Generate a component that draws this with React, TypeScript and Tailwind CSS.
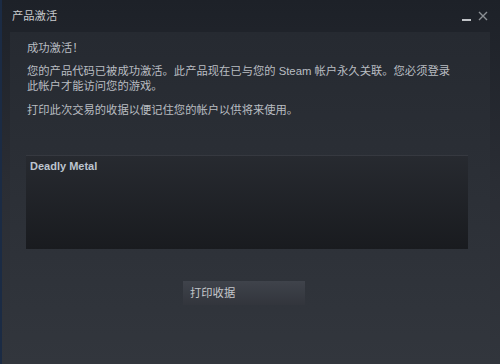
import React from 'react';

const cjk = '"Liberation Sans", "Noto Sans CJK SC", sans-serif';

export default function App() {
  return (
    <div
      className="w-[500px] h-[364px] flex flex-col border-l-2 border-[#1b2b44] bg-gradient-to-b from-[#1d2128] via-[#2a2d34] to-[#31353c] text-[#b9bdc2] overflow-hidden"
      style={{ fontFamily: cjk }}
    >
      {/* Title bar */}
      <div className="h-[32px] flex items-center justify-between pl-[10px] pr-[12px] shrink-0">
        <span className="text-[11.3px] text-[#c8cacd]">产品激活</span>
        <div className="flex items-center gap-[7px]">
          <div className="w-[9px] h-[2px] bg-[#c0c3c7] mt-[7px]" />
          <svg width="10" height="10" viewBox="0 0 10 10" className="text-[#8b8f94]">
            <path d="M1 1 L9 9 M9 1 L1 9" stroke="currentColor" strokeWidth="1.4" />
          </svg>
        </div>
      </div>

      {/* Inner panel */}
      <div className="flex-1 ml-[8px] mr-[10px] bg-gradient-to-b from-[#262a31] to-[#32363d] px-[17px] pt-[9px] flex flex-col">
        <p className="text-[11.3px] leading-[15px]">成功激活！</p>
        <p className="text-[11.3px] leading-[15px] mt-[8px] w-[432px]">
          您的产品代码已被成功激活。此产品现在已与您的 Steam 帐户永久关联。您必须登录此帐户才能访问您的游戏。
        </p>
        <p className="text-[11.3px] leading-[15px] mt-[9px]">打印此次交易的收据以便记住您的帐户以供将来使用。</p>

        <div className="mt-[37px] h-[94px] w-[442px] -ml-[1px] border-t border-[#363940] bg-gradient-to-b from-[#272a30] to-[#191b1f] px-[4px] pt-[3px]">
          <p className="text-[11px] leading-[14px] font-bold text-[#bcc4cf]">Deadly Metal</p>
        </div>

        <div className="mt-[32px] flex justify-center pr-[12px]">
          <button className="w-[122px] h-[24px] bg-gradient-to-b from-[#3f434b] to-[#32353c] text-left pl-[7px] text-[11.3px] text-[#c4c7cb]">
            打印收据
          </button>
        </div>
      </div>
    </div>
  );
}
